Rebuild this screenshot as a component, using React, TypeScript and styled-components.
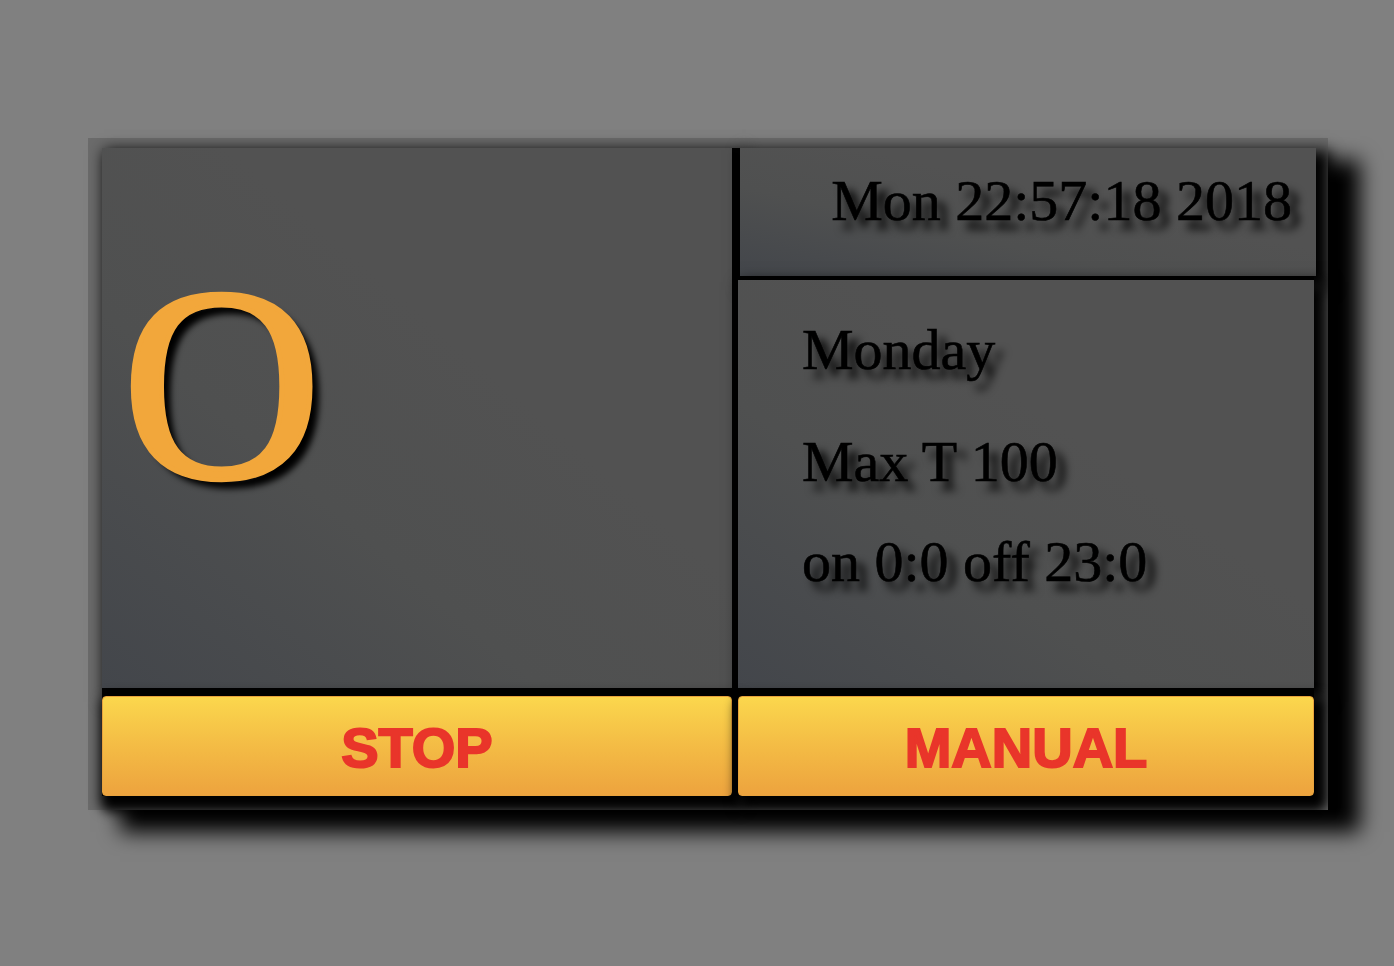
import React from 'react';
import styled, { createGlobalStyle } from 'styled-components';

interface LineProps {
  space: number;
}

const GlobalStyle = createGlobalStyle`
  html, body {
    margin: 0;
    padding: 0;
    background: #808080;
  }
`;

const Page = styled.div`
  width: 1394px;
  height: 966px;
  padding: 138px 0 0 88px;
  box-sizing: border-box;
  background: #808080;
`;

const Frame = styled.div`
  width: 1240px;
  height: 672px;
  box-sizing: border-box;
  padding: 10px 14px 14px 14px;
  background: #6b6b6b;
  box-shadow: 32px 22px 20px #000;
`;

const Board = styled.div`
  display: grid;
  grid-template-columns: 630px 576px;
  grid-template-rows: 128px 408px 104px;
  column-gap: 6px;
  row-gap: 4px;
  background: #050505;
`;

const Panel = styled.div`
  background: linear-gradient(to top right, #43464b 0%, #4f5050 35%, #525252 60%);
  box-shadow: 8px 8px 14px 6px #000;
`;

const TempPanel = styled(Panel)`
  grid-row: 1 / span 2;
  padding: 98px 0 0 20px;
`;

const Temp = styled.div`
  font-family: 'Liberation Serif', 'Times New Roman', serif;
  font-size: 276px;
  line-height: 1;
  color: #f2a73b;
  -webkit-text-stroke: 5px #f2a73b;
  text-shadow: 9px 9px 6px #000;
`;

const ClockPanel = styled(Panel)`
  margin: 0 -2px 0 2px;
  padding: 24px 24px 0 0;
  text-align: right;
`;

const InfoPanel = styled(Panel)`
  padding: 41px 0 0 64px;
`;

const SerifText = styled.div`
  font-family: 'Liberation Serif', 'Times New Roman', serif;
  font-size: 58px;
  line-height: 1;
  color: #000;
  white-space: nowrap;
  -webkit-text-stroke: 0.6px #000;
  text-shadow: 9px 9px 8px #000;
`;

const Line = styled(SerifText)`
  margin-top: ${(props: LineProps) => props.space}px;
`;

const Button = styled.button`
  margin-top: 4px;
  height: 100px;
  display: flex;
  align-items: center;
  justify-content: center;
  padding: 4px 0 0 0;
  border: 1px solid #e8a23c;
  border-radius: 4px;
  background: linear-gradient(to bottom, #fbd74d 0%, #f3b944 55%, #eda33e 100%);
  box-shadow: 6px 8px 12px 8px #000;
  font-family: 'Liberation Sans', Arial, sans-serif;
  font-weight: 700;
  font-size: 56px;
  line-height: 1;
  color: #e9352a;
  -webkit-text-stroke: 2px #e9352a;
  cursor: pointer;
`;

const App = () => {
  return (
    <Page>
      <GlobalStyle />
      <Frame>
        <Board>
          <TempPanel>
            <Temp>O</Temp>
          </TempPanel>
          <ClockPanel>
            <SerifText>Mon 22:57:18 2018</SerifText>
          </ClockPanel>
          <InfoPanel>
            <Line space={0}>Monday</Line>
            <Line space={54}>Max T 100</Line>
            <Line space={42}>on 0:0 off 23:0</Line>
          </InfoPanel>
          <Button>STOP</Button>
          <Button>MANUAL</Button>
        </Board>
      </Frame>
    </Page>
  );
};

export default App;
